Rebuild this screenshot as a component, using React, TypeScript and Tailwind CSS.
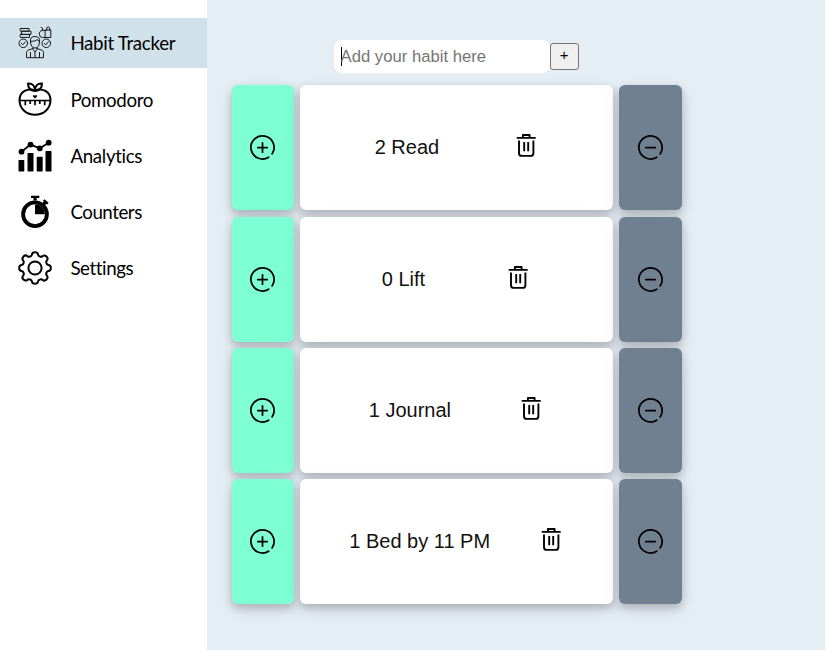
import React from 'react';

function HabitIcon() {
  return (
    <svg width="34" height="34" viewBox="0 0 34 34" fill="none" stroke="#15191b" strokeWidth="1" strokeLinejoin="round" strokeLinecap="round">
      <path d="M2.500 2.500h8.500v2.700h-8.500q-1.200-1.300 0-2.700zM4 5.200h9v3.200H4zM2.500 8.400h9v3h-9q-1.200-1.500 0-3z" />
      <path d="M27.500 4h5.300v7.500h-5.300zM28.700 4v-2.200q1.500-2 3 0v2.200M27.500 4.500q-6-1.200-6.200 3.200 0 3.800 3.200 3.800h3M24.500 4.200v-2l-1.500-.7" />
      <circle cx="5.300" cy="17.300" r="4.300" />
      <circle cx="28.300" cy="17.300" r="4.300" />
      <path d="M3.300 17.300l1.500 1.500 2.700-3M26.300 17.300l1.500 1.500 2.700-3" />
      <path d="M12.500 16q-1-5.500 4.500-5.500t4.500 5.500q-.5 6-4.500 6t-4.500-6zM12.500 15.500q5 0 7-2 0 1.500 2 2M15 22v1.500l2 2.500 2-2.500v-1.500M15 22.500l-5 1.700q-1.500.8-1.500 3v4.500h17v-4.500q0-2.200-1.500-3l-5-1.700M12.500 26.500v5M21.500 26.500v5M17 26v5.500" />
    </svg>
  );
}

function PomodoroIcon() {
  return (
    <svg width="34" height="34" viewBox="0 0 34 34" fill="none" stroke="#000" strokeWidth="2" strokeLinejoin="round">
      <path d="M17 8.300C10 5.800 1.500 9 1.500 18.200c0 8.500 7.100 14.500 15.500 14.500s15.500-6 15.500-14.500c0-9.200-8.500-12.400-15.500-9.900z" />
      <path d="M17 9C12.500 8.500 10 6 10 1.500 14.500 1.200 17 3.700 17 9zM17 9c0-5.300 2.500-7.800 7-7.500 0 4.500-2.500 7-7 7.500z" />
      <path d="M1.500 18.500h31M7.300 19v4.300M12.200 19v3M17 19v4.300M21.800 19v3M26.700 19v4.300" strokeWidth="1.700" />
      <path d="M17 16.500l-2-2q-.3-1.600 1-1.500l1 .7 1-.7q1.300-.1 1 1.500z" fill="#000" stroke="none" />
    </svg>
  );
}

function AnalyticsIcon() {
  return (
    <svg width="34" height="34" viewBox="0 0 34 34" fill="#000">
      <rect x=".5" y="21" width="5.800" height="11.500" rx=".7" />
      <rect x="9.500" y="14" width="6" height="18.500" rx=".7" />
      <rect x="18.700" y="17.700" width="6" height="14.800" rx=".7" />
      <rect x="27.500" y="12" width="6" height="20.500" rx=".7" />
      <circle cx="3.500" cy="12.700" r="2.900" />
      <circle cx="12.500" cy="5.600" r="2.900" />
      <circle cx="21.800" cy="9.300" r="2.900" />
      <circle cx="30.700" cy="3.700" r="2.900" />
      <path d="M3.500 12.700l9-7.100 9.300 3.700 8.900-5.600" fill="none" stroke="#000" strokeWidth="1.800" />
    </svg>
  );
}

function CounterIcon() {
  return (
    <svg width="34" height="34" viewBox="0 0 34 34">
      <circle cx="17" cy="19.300" r="11.900" fill="none" stroke="#000" strokeWidth="3.800" />
      <path d="M17 9.200a10 10 0 0 1 10 10H17zM13 .8h8.300v2.300h-2.600v2.400h-3.200V3.100H13zM26.600 4.300l4 3.400-1.400 1.700-.9-.5-1.700 1.700-2.500-2.200 1.500-1.900-.6-.9z" fill="#000" />
    </svg>
  );
}

function SettingsIcon() {
  return (
    <svg width="34" height="34" viewBox="0 0 34 34" fill="none" stroke="#000" strokeWidth="2" strokeLinejoin="round">
      <circle cx="17" cy="17" r="6.600" />
      <path d="M14 3.500q.2-2.300 3-2.300t3 2.300q.2 1.700 2 2.100 1.300.6 2.700-.5 1.800-1.500 3.800.4t.4 3.800q-1.100 1.400-.5 2.700.4 1.800 2.100 2 2.300.2 2.300 3t-2.300 3q-1.700.2-2.100 2-.6 1.300.5 2.700 1.500 1.800-.4 3.800t-3.800.4q-1.400-1.100-2.700-.5-1.800.4-2 2.100-.2 2.300-3 2.300t-3-2.300q-.2-1.700-2-2.100-1.300-.6-2.700.5-1.800 1.500-3.800-.4t-.4-3.800q1.100-1.400.5-2.700-.4-1.800-2.100-2-2.300-.2-2.300-3t2.300-3q1.700-.2 2.100-2 .6-1.300-.5-2.700-1.500-1.800.4-3.800t3.800-.4q1.400 1.100 2.700.5 1.800-.4 2-2.100z" />
    </svg>
  );
}

function CircleIcon({ plus }: { plus?: boolean }) {
  return (
    <svg width="25" height="25" viewBox="0 0 25 25" fill="none" stroke="#000" strokeWidth="1.750" strokeLinecap="round" className="overflow-visible">
      <path d="M18.700 22.200A11.600 11.600 0 1 1 22.100 18.900" />
      <path d={plus ? 'M7.800 12.500h9.400M12.500 7.800v9.400' : 'M7.800 12.500h9.400'} />
    </svg>
  );
}

function TrashIcon() {
  return (
    <svg width="25" height="25" viewBox="0 0 25 25" fill="none" stroke="#000" strokeWidth="1.900" strokeLinejoin="round">
      <path d="M2.700 4.900h19M8.900 4.900V2h6.700v2.900M5 7.500v12.700q0 2.700 2.700 2.700h9q2.700 0 2.700-2.700V7.500M10.200 9v9.200M14.200 9v9.200" />
    </svg>
  );
}

const nav = [
  { label: 'Habit Tracker', icon: <HabitIcon />, style: 'bg-[#d0e1e9] tracking-[-0.32px]' },
  { label: 'Pomodoro', icon: <PomodoroIcon />, style: 'tracking-[-0.38px]' },
  { label: 'Analytics', icon: <AnalyticsIcon />, style: 'tracking-[-0.34px]' },
  { label: 'Counters', icon: <CounterIcon />, style: 'tracking-[-0.48px]' },
  { label: 'Settings', icon: <SettingsIcon />, style: 'tracking-[-0.42px]' },
];

const habits = ['2 Read', '0 Lift', '1 Journal', '1 Bed by 11 PM'];
const shadow = 'rounded-[6px] shadow-[0_4px_8px_rgba(0,0,0,0.2),0_6px_20px_rgba(0,0,0,0.09)]';

export default function App() {
  return (
    <div className="flex h-[650px] w-[825px] overflow-hidden bg-[#e5edf5] text-black">
      <nav className="flex w-[207px] shrink-0 flex-col gap-[6.25px] bg-white pt-[18px] font-['Lato','Noto_Sans',sans-serif] text-[18.75px] [font-variant-ligatures:none]">
        {nav.map((item) => (
          <a key={item.label} className={`flex h-[50px] items-center gap-[18px] pl-[18.400px] ${item.style}`}>
            <span className="shrink-0">{item.icon}</span>
            <span className="pt-px">{item.label}</span>
          </a>
        ))}
      </nav>
      <main className="pl-[24.600px] pt-10 font-['Liberation_Sans',Arial,sans-serif]">
        <form className="flex h-[45.25px] items-start pl-[102px]">
          <div className="flex h-[33px] w-[216px] items-center rounded-[8px] bg-white pl-[7px] text-[16.67px] text-[#757575]">
            <span className="h-[19px] w-px bg-black" />
            <span className="-ml-px">Add your habit here</span>
          </div>
          <button type="button" className="mt-[3px] flex h-[27px] w-[29px] items-center justify-center rounded-[3px] border border-[#767676] bg-[#efefef] pb-[2px] text-[15px]">+</button>
        </form>
        <div className="flex flex-col gap-[6.25px]">
          {habits.map((habit) => (
            <div key={habit} className="flex h-[125px] gap-[6.25px]">
              <button type="button" className={`flex w-[62.5px] items-center justify-center bg-[#7fffd4] ${shadow}`}><CircleIcon plus /></button>
              <div className={`flex w-[312.5px] items-center justify-evenly bg-white text-[20px] text-[#111] ${shadow}`}>
                <span className="pb-px">{habit}</span>
                <button type="button" className="pb-[4px]"><TrashIcon /></button>
              </div>
              <button type="button" className={`flex w-[62.5px] items-center justify-center bg-[#708090] ${shadow}`}><CircleIcon /></button>
            </div>
          ))}
        </div>
      </main>
    </div>
  );
}
